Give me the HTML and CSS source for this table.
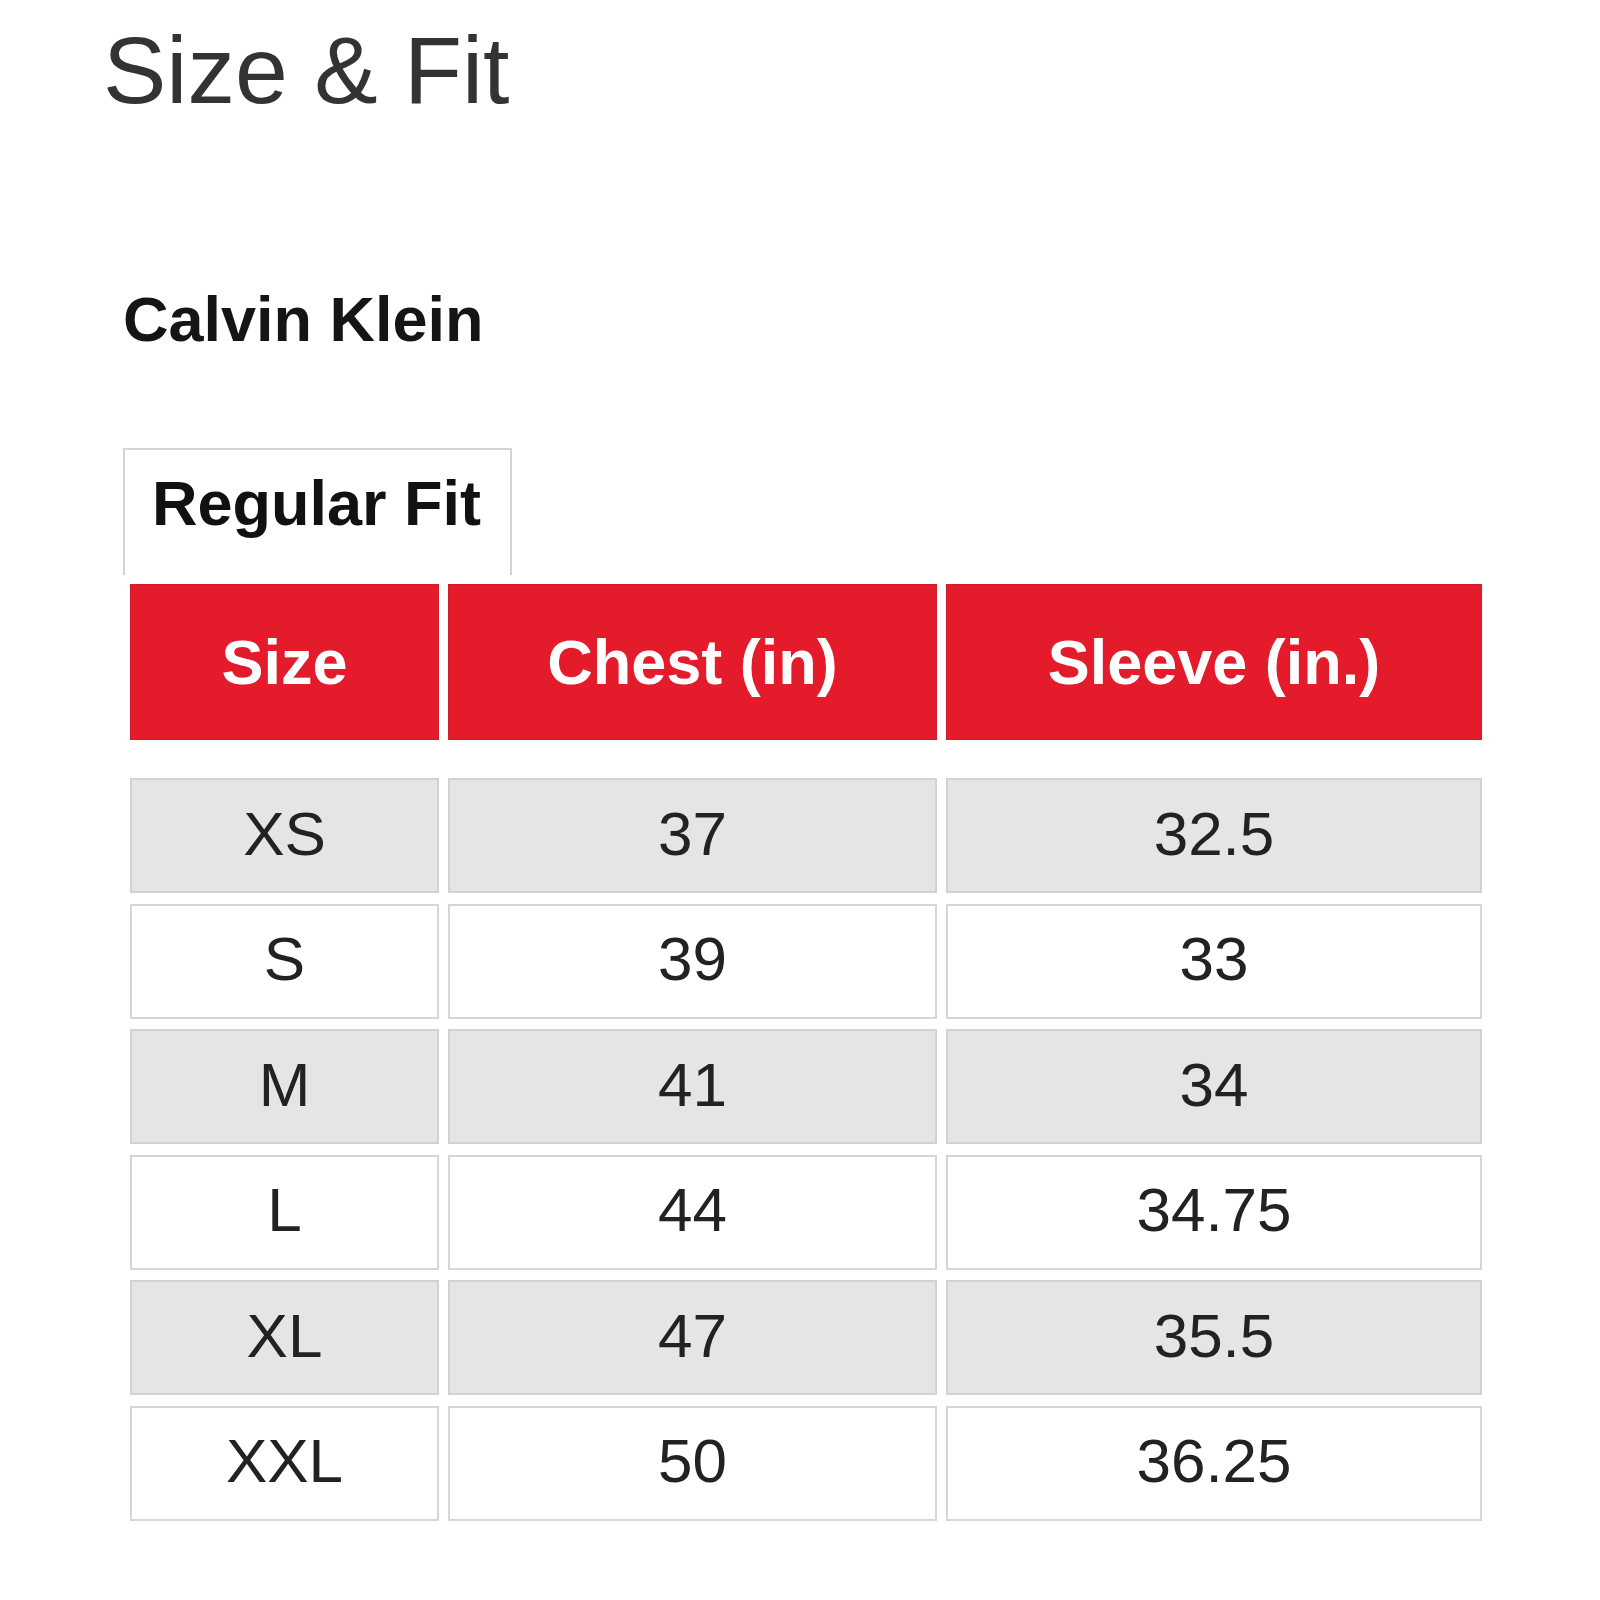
FILE: index.html
```html
<!DOCTYPE html>
<html lang="en">
<head>
<meta charset="utf-8">
<title>Size &amp; Fit</title>
<link rel="stylesheet" href="styles.css">
</head>
<body>
<main class="page">
  <h1 class="title">Size &amp; Fit</h1>
  <h2 class="brand">Calvin Klein</h2>
  <div class="tab">Regular Fit</div>
  <div class="chart">
    <div class="chart-head">
      <div class="hcell">Size</div>
      <div class="hcell">Chest (in)</div>
      <div class="hcell">Sleeve (in.)</div>
    </div>
    <div class="chart-body">
      <div class="cell alt">XS</div><div class="cell alt">37</div><div class="cell alt">32.5</div>
      <div class="cell">S</div><div class="cell">39</div><div class="cell">33</div>
      <div class="cell alt">M</div><div class="cell alt">41</div><div class="cell alt">34</div>
      <div class="cell">L</div><div class="cell">44</div><div class="cell">34.75</div>
      <div class="cell alt">XL</div><div class="cell alt">47</div><div class="cell alt">35.5</div>
      <div class="cell">XXL</div><div class="cell">50</div><div class="cell">36.25</div>
    </div>
  </div>
</main>
</body>
</html>
```

FILE: styles.css
```css
* { box-sizing: border-box; }

html, body {
  margin: 0;
  background: #ffffff;
}

body {
  font-family: "Liberation Sans", Arial, sans-serif;
}

.page {
  padding-top: 23px;
  padding-bottom: 60px;
}

.title {
  margin: 0 0 0 103px;
  font-size: 95px;
  line-height: 95px;
  font-weight: 400;
  color: #333333;
}

.brand {
  margin: 170px 0 0 123px;
  font-size: 63px;
  line-height: 63px;
  font-weight: 700;
  color: #151515;
}

.tab {
  margin: 97px 0 0 123px;
  width: 389px;
  height: 127px;
  padding: 22px 0 0 27px;
  border: 2px solid #d4d4d4;
  border-bottom: none;
  font-size: 63px;
  line-height: 63px;
  font-weight: 700;
  color: #111111;
}

.chart {
  margin: 9px 0 0 130px;
  width: 1352px;
}

.chart-head,
.chart-body {
  display: grid;
  grid-template-columns: 309px 489px 536px;
  column-gap: 9px;
}

.hcell {
  height: 156px;
  display: flex;
  align-items: center;
  justify-content: center;
  background: #e31b2b;
  border: 1px solid #cc1d2c;
  color: #ffffff;
  font-size: 63px;
  line-height: 63px;
  font-weight: 700;
}

.chart-body {
  margin-top: 38px;
  row-gap: 10.5px;
}

.cell {
  height: 115px;
  display: flex;
  align-items: center;
  justify-content: center;
  padding-bottom: 4px;
  background: #ffffff;
  border: 2px solid #d6d6d6;
  color: #222222;
  font-size: 62px;
  line-height: 62px;
  font-weight: 400;
}

.cell.alt {
  background: #e5e5e5;
  border-color: #d2d2d2;
}
```
